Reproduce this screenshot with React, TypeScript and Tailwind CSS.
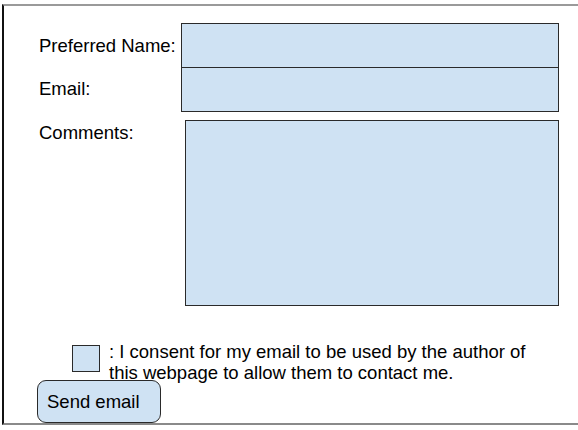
export default function App() {
  return (
    <div className="w-[578px] h-[430px] bg-white text-black font-['Liberation_Sans',Arial,sans-serif] text-[18.5px] overflow-hidden">
      <div className="mt-[4px] ml-[2px] h-[421px] border-t-2 border-t-[#9a9a9a] border-l-2 border-l-[#111] border-b-2 border-b-[#8a8a8a] flex flex-col pt-[17px]">
        <div className="flex items-center pl-[35px] h-[45px]">
          <label className="w-[142px]">Preferred Name:</label>
          <div className="w-[378px] h-[45px] bg-[#cfe2f3] border-[1.5px] border-[#2a2a2a]" />
        </div>
        <div className="flex items-center pl-[35px] h-[45px] -mt-[1.5px]">
          <label className="w-[142px]">Email:</label>
          <div className="w-[378px] h-[45px] bg-[#cfe2f3] border-[1.5px] border-[#2a2a2a]" />
        </div>
        <div className="flex items-start pl-[35px] mt-[8px]">
          <label className="w-[146px] leading-[21px] pt-[2px]">Comments:</label>
          <div className="w-[374px] h-[186px] bg-[#cfe2f3] border-[1.5px] border-[#2a2a2a]" />
        </div>
        <div className="flex items-start ml-[68px] mt-[35px] gap-[9px]">
          <div className="mt-[4px] w-[28px] h-[27px] bg-[#cfe2f3] border-[1.5px] border-[#2a2a2a] shrink-0" />
          <p className="leading-[21px]">
            : I consent for my email to be used by the author of
            <br />
            this webpage to allow them to contact me.
          </p>
        </div>
        <button className="ml-[33px] -mt-[3px] w-[124px] h-[45px] bg-[#cfe2f3] border-[1.5px] border-[#2a2a2a] rounded-[9px] text-left pl-[9px] pt-[2px]">
          Send email
        </button>
      </div>
    </div>
  )
}
